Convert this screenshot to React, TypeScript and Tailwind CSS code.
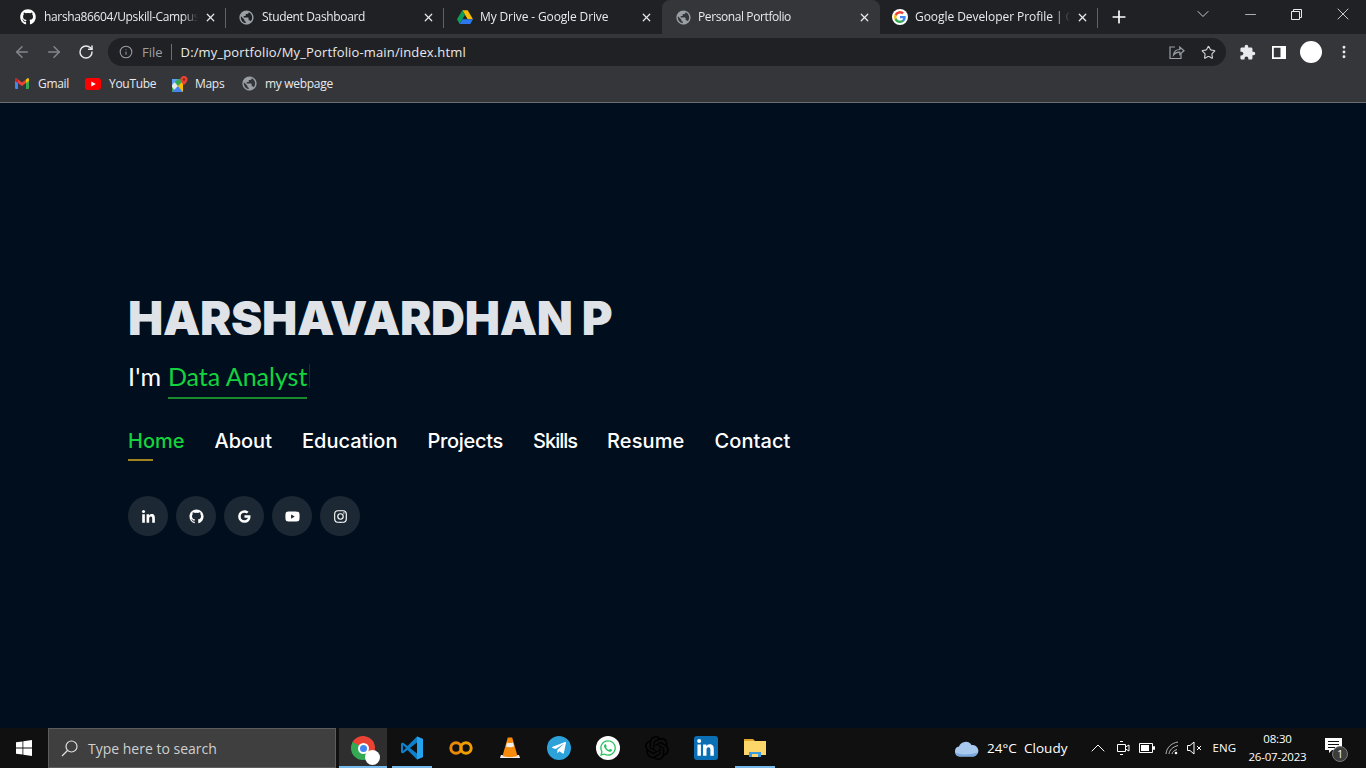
import React from 'react';
import { ArrowLeft, ArrowRight, RotateCw, Info, Star, X, Plus, ChevronDown, ChevronUp, Minus, MoreVertical } from 'lucide-react';
import { FaGithub, FaTelegramPlane, FaWhatsapp, FaLinkedinIn } from 'react-icons/fa';
import { MdPublic, MdExtension } from 'react-icons/md';
import { BiLogoLinkedin, BiLogoGithub, BiLogoGoogle, BiLogoYoutube, BiLogoInstagram } from 'react-icons/bi';
import { SiOpenai } from 'react-icons/si';

const GoogleG = () => (
  <svg width="16" height="16" viewBox="0 0 24 24">
    <circle cx="12" cy="12" r="12" fill="#fff" />
    <path d="M20.6 12.2c0-.6-.1-1.200-.2-1.800H12v3.400h4.800a4.100 4.100 0 0 1-1.800 2.700v2.200h2.900c1.700-1.600 2.700-3.900 2.700-6.500z" fill="#4285f4" />
    <path d="M12 21c2.400 0 4.400-.8 5.900-2.200L15 16.500c-.8.500-1.800.9-3 .9-2.300 0-4.300-1.600-5-3.700H4v2.300A9 9 0 0 0 12 21z" fill="#34a853" />
    <path d="M7 13.700a5.400 5.400 0 0 1 0-3.400V8H4a9 9 0 0 0 0 8z" fill="#fbbc05" />
    <path d="M12 6.600c1.300 0 2.500.5 3.400 1.300L18 5.400A9 9 0 0 0 4 8l3 2.300c.7-2.100 2.700-3.700 5-3.700z" fill="#ea4335" />
  </svg>
);

const DriveIcon = () => (
  <svg width="16" height="16" viewBox="0 0 24 22">
    <path d="M8 1h8l8 13.500h-8z" fill="#fbbc04" />
    <path d="M8 1 0 14.500l4 7 8-14z" fill="#0f9d58" />
    <path d="M4 21.500h16l4-7H8z" fill="#2b78ee" />
  </svg>
);

const GmailIcon = () => (
  <svg width="14" height="11" viewBox="0 0 14 11">
    <path d="M0 1.500C0 .5 1 0 1.800.5L3 1.500V11H1a1 1 0 0 1-1-1z" fill="#4285f4" />
    <path d="M14 1.500c0-1-1-1.500-1.800-1L11 1.500V11h2a1 1 0 0 0 1-1z" fill="#34a853" />
    <path d="M3 1.500 7 4.600l4-3.100V5L7 8 3 5z" fill="#ea4335" />
    <path d="M11 1.500 12.200.5c.8-.5 1.800 0 1.800 1V3l-3 2z" fill="#fbbc04" />
    <path d="M3 1.500 1.800.5C1 0 0 .5 0 1.500V3l3 2z" fill="#c5221f" />
  </svg>
);

const YoutubeIcon = () => (
  <svg width="16" height="12" viewBox="0 0 16 12">
    <rect width="16" height="12" rx="3" fill="#f00" />
    <path d="M6.300 3.400 10.800 6l-4.500 2.600z" fill="#fff" />
  </svg>
);

const MapsIcon = () => (
  <svg width="16" height="16" viewBox="0 0 16 16">
    <path d="M0 3h11v13H0z" fill="#35a853" />
    <path d="M0 3l11 13H4L0 11z" fill="#e8e8e8" />
    <path d="M0 16l6-6 5 6z" fill="#4285f4" />
    <path d="M6 10 11 5v11z" fill="#fbbc04" />
    <path d="M0 3h6L0 9z" fill="#5f9ef5" />
    <path d="M12 0a3.500 3.500 0 0 1 3.500 3.500C15.500 6 12 9 12 9S8.500 6 8.500 3.500A3.500 3.500 0 0 1 12 0z" fill="#ea4335" />
    <circle cx="12" cy="3.500" r="1.200" fill="#8f1f16" />
  </svg>
);

const ShareIcon = () => (
  <svg width="16" height="16" viewBox="0 0 16 16" fill="none" stroke="#9aa0a6" strokeWidth="1.200">
    <path d="M6 3H1v11.500h11V10" />
    <path d="M4.500 11c.4-3.500 2.800-5.400 6.300-5.500V3l4.200 3.800-4.200 3.700V8.200C8 8 6 9 4.500 11z" />
  </svg>
);

const tabs = [
  { title: 'harsha86604/Upskill-Campus-Internship', icon: <FaGithub size={16} color="#fff" />, left: 12, gap: 8, cls: 'tracking-[-0.35px]' },
  { title: 'Student Dashboard', icon: <MdPublic size={17} color="#9aa0a6" />, left: 12, gap: 7, cls: 'tracking-[-0.35px]' },
  { title: 'My Drive - Google Drive', icon: <DriveIcon />, left: 13, gap: 7, cls: 'tracking-[-0.13px]' },
  { title: 'Personal Portfolio', icon: <MdPublic size={17} color="#9aa0a6" />, left: 13, gap: 6, cls: 'tracking-[-0.4px]', active: true },
  { title: 'Google Developer Profile | Google', icon: <GoogleG />, left: 12, gap: 7, cls: 'tracking-[-0.06px]' },
];

const Tab = ({ title, icon, left, gap, cls, active, sep }: { title: string; icon: React.ReactNode; left: number; gap: number; cls: string; active?: boolean; sep: boolean }) => (
  <div
    className={`relative flex items-center w-[218px] pr-[9px] ${active ? 'h-[38px] bg-[#35363a] rounded-t-lg pb-[4px]' : 'h-[34px]'}`}
    style={{ paddingLeft: left }}
  >
    {icon}
    <span
      className={`flex-1 min-w-0 whitespace-nowrap overflow-hidden text-[12px] text-[#e8eaed] [mask-image:linear-gradient(to_right,black_90%,transparent)] ${cls}`}
      style={{ marginLeft: gap }}
    >
      {title}
    </span>
    <X size={13} color="#e8eaed" strokeWidth={2.2} className="ml-[6px] shrink-0" />
    {sep && <div className="absolute right-0 top-[8px] w-px h-[20px] bg-[#5f6368]" />}
  </div>
);

const Bookmark = ({ icon, label, gap, width }: { icon: React.ReactNode; label: string; gap: number; width: number }) => (
  <div className="flex items-center text-[12px] tracking-[-0.3px] text-[#e8eaed] shrink-0" style={{ width }}>
    <span className="flex items-center justify-center shrink-0">{icon}</span>
    <span style={{ marginLeft: gap }}>{label}</span>
  </div>
);

const TaskIcon = ({ children, running, active }: { children: React.ReactNode; running?: boolean; active?: boolean }) => (
  <div className={`relative h-[40px] flex items-center justify-center ${active ? 'w-[48px] bg-[#2e2e2e]' : 'w-[49px]'}`}>
    {children}
    {running && <div className={`absolute bottom-0 h-[2px] bg-[#76b9ed] ${active ? 'left-0 right-0' : 'left-[5px] w-[40px]'}`} />}
  </div>
);

const navLinks = [
  { label: 'Home', cls: 'text-[#13d33f]' },
  { label: 'About', cls: '' },
  { label: 'Education', cls: '' },
  { label: 'Projects', cls: 'tracking-[-0.3px]' },
  { label: 'Skills', cls: 'tracking-[-1px]' },
  { label: 'Resume', cls: 'tracking-[0.1px]' },
  { label: 'Contact', cls: 'tracking-[0.1px]' },
];
const socials = [BiLogoLinkedin, BiLogoGithub, BiLogoGoogle, BiLogoYoutube, BiLogoInstagram];

export default function App() {
  return (
    <div className="w-[1366px] h-[768px] overflow-hidden flex flex-col bg-[#010e1d] font-['Open_Sans',sans-serif]">
      {/* tab strip */}
      <div className="h-[38px] shrink-0 bg-[#202124] flex items-start pl-[8px] relative">
        <div className="absolute left-0 right-0 top-[34px] h-[4px] bg-[#35363a]" />
        <div className="relative flex items-start">
          {tabs.map((t, i) => (
            <Tab key={t.title} {...t} sep={i !== 3 && i !== 2} />
          ))}
        </div>
        <div className="relative h-[34px] flex items-center ml-[11px]">
          <Plus size={20} color="#fff" strokeWidth={2} />
        </div>
        <div className="relative ml-auto h-[28px] flex items-center text-[#e8eaed]">
          <ChevronDown size={20} strokeWidth={1} className="mr-[29px]" />
          <Minus size={17} strokeWidth={1} className="mr-[32px]" />
          <svg width="11" height="11" viewBox="0 0 11 11" fill="none" stroke="#e8eaed" className="mr-[31px]">
            <path d="M.5 2.500h8v8h-8zM2.500 2.500v-2h8v8h-2" />
          </svg>
          <X size={20} strokeWidth={1} className="mr-[13px]" />
        </div>
      </div>

      {/* toolbar */}
      <div className="h-[28px] shrink-0 bg-[#35363a] flex items-center pl-[13px] pr-[13px]">
        <ArrowLeft size={18} color="#83868b" strokeWidth={2} />
        <ArrowRight size={18} color="#83868b" strokeWidth={2} className="ml-[14px]" />
        <RotateCw size={16} color="#e8eaed" strokeWidth={2.2} className="ml-[15px]" />
        <div className="ml-[14px] w-[1118px] h-[28px] rounded-full bg-[#202124] flex items-center pl-[11px] pr-[10px]">
          <Info size={14} color="#9aa0a6" strokeWidth={1.8} />
          <span className="ml-[9px] mt-[2px] text-[13px] text-[#9aa0a6]">File</span>
          <div className="w-px h-[16px] bg-[#6b6e72] ml-[8px]" />
          <span className="ml-[9px] mt-[2px] text-[13px] text-[#e8eaed] tracking-[0.14px]">D:/my_portfolio/My_Portfolio-main/index.html</span>
          <div className="ml-auto flex items-center">
            <ShareIcon />
            <Star size={15} color="#cfd1d4" strokeWidth={1.8} className="ml-[16px]" />
          </div>
        </div>
        <MdExtension size={17} color="#e8eaed" className="ml-[13px]" />
        <svg width="14" height="13" viewBox="0 0 14 13" className="ml-[16px]">
          <path d="M0 0h14v13H0zM1.800 1.800v9.400h6.700V1.800z" fill="#fff" fillRule="evenodd" />
        </svg>
        <div className="w-[22px] h-[22px] rounded-full bg-white ml-[14px]" />
        <MoreVertical size={16} color="#e8eaed" strokeWidth={2.4} className="ml-[14px]" />
      </div>

      {/* bookmarks */}
      <div className="h-[37px] shrink-0 bg-[#35363a] border-b border-[#6c6e72] flex items-center pl-[15px] pb-[1px]">
        <Bookmark icon={<GmailIcon />} label="Gmail" gap={9} width={70} />
        <Bookmark icon={<YoutubeIcon />} label="YouTube" gap={8} width={87} />
        <Bookmark icon={<MapsIcon />} label="Maps" gap={7} width={69} />
        <Bookmark icon={<MdPublic size={17} color="#9aa0a6" />} label="my webpage" gap={7} width={110} />
      </div>

      {/* hero */}
      <main className="flex-1 pl-[128px] pt-[185px]">
        <h1 className="font-['Inter',sans-serif] font-black text-[47px] leading-[60px] text-[#dfe3e8] tracking-[-0.3px]">HARSHAVARDHAN P</h1>
        <div className="mt-[12px] flex items-start font-['Lato',sans-serif] text-[25px] leading-[32px] text-white">
          <span className="tracking-[0.2px]">I'm&nbsp;</span>
          <span className="text-[#13d33f] border-b-2 border-[#1b8a2d] pb-[5px]">Data Analyst</span>
          <span className="w-px h-[24px] bg-[#1c2a33] ml-[2px] mt-[4px]" />
        </div>
        <nav className="mt-[27px] flex items-start gap-[30px] font-['Inter',sans-serif] font-medium text-[20px] leading-[30px] text-white">
          {navLinks.map((l, i) => (
            <div key={l.label} className="flex flex-col">
              <span className={l.cls}>{l.label}</span>
              {i === 0 && <div className="w-[25px] h-[2px] bg-[#a2821f] mt-[3px]" />}
            </div>
          ))}
        </nav>
        <div className="mt-[35px] flex gap-[8px]">
          {socials.map((Icon, i) => (
            <div key={i} className="w-[40px] h-[40px] rounded-full bg-[#1c2833] flex items-center justify-center">
              <Icon size={17} color="#fff" />
            </div>
          ))}
        </div>
      </main>

      {/* taskbar */}
      <div className="h-[40px] shrink-0 bg-[#101010] flex items-center text-white">
        <div className="w-[48px] flex justify-center">
          <svg width="16" height="16" viewBox="0 0 16 16" fill="#fff">
            <path d="M0 2.300 6.500 1.400v6.200H0zM7.300 1.300 16 0v7.600H7.300zM0 8.400h6.500v6.200L0 13.700zM7.300 8.400H16V16l-8.700-1.200z" />
          </svg>
        </div>
        <div className="w-[288px] h-[40px] bg-[#3f3f3f] border border-[#5c5c5c] flex items-center pl-[12px] mr-[3px]">
          <svg width="17" height="17" viewBox="0 0 17 17" fill="none" stroke="#e0e0e0" strokeWidth="1.200">
            <circle cx="10.500" cy="6.500" r="5.500" />
            <path d="M6.500 10.500 1 16" />
          </svg>
          <span className="ml-[10px] text-[14px] text-[#cfcfcf]">Type here to search</span>
        </div>
        <TaskIcon running active>
          <div className="relative w-[24px] h-[24px]">
            <div className="w-[24px] h-[24px] rounded-full bg-[conic-gradient(#ea4335_0deg_120deg,#fbbc04_120deg_150deg,#34a853_150deg_300deg,#ea4335_300deg_360deg)] flex items-center justify-center">
              <div className="w-[11px] h-[11px] rounded-full bg-[#4285f4] border-2 border-white" />
            </div>
            <div className="absolute right-[-5px] bottom-[-5px] w-[15px] h-[15px] rounded-full bg-white" />
          </div>
        </TaskIcon>
        <TaskIcon running>
          <svg width="24" height="24" viewBox="0 0 24 24">
            <path d="M17 .6 7.500 10 3 6.500 1 7.500v9l2 1L7.500 14l9.500 9.400 6-2.400V3z" fill="#0e7fcb" />
            <path d="M17 6.500 10 12l7 5.500z" fill="#101010" />
            <path d="M3 9v6l3-3z" fill="#101010" />
            <path d="M17 .6 23 3v18l-6 2.400z" fill="#24a2ee" />
          </svg>
        </TaskIcon>
        <TaskIcon>
          <svg width="24" height="14" viewBox="0 0 24 14" fill="none" strokeWidth="3">
            <circle cx="7" cy="7" r="5.200" stroke="#e8890a" />
            <circle cx="17" cy="7" r="5.200" stroke="#f09d00" />
          </svg>
        </TaskIcon>
        <TaskIcon>
          <svg width="20" height="24" viewBox="0 0 20 24">
            <path d="M1 19h18l1 3H0z" fill="#f0f0f0" />
            <path d="M7.800 1.500h4.400L17.500 20c-4 1.500-11 1.500-15 0z" fill="#f58a0b" />
            <path d="M7 6.500c1.500.7 4.500.7 6 0l1 4c-2 1-6 1-8 0z" fill="#f0f0f0" />
          </svg>
        </TaskIcon>
        <TaskIcon>
          <div className="w-[24px] h-[24px] rounded-full bg-[#2ca1da] flex items-center justify-center">
            <FaTelegramPlane size={16} color="#fff" />
          </div>
        </TaskIcon>
        <TaskIcon>
          <div className="w-[24px] h-[24px] rounded-full bg-white flex items-center justify-center">
            <FaWhatsapp size={18} color="#29c35f" />
          </div>
        </TaskIcon>
        <TaskIcon>
          <SiOpenai size={24} color="#000" />
        </TaskIcon>
        <TaskIcon>
          <div className="w-[24px] h-[24px] rounded-[3px] bg-[#0a6fb5] flex items-center justify-center">
            <FaLinkedinIn size={19} color="#fff" />
          </div>
        </TaskIcon>
        <TaskIcon running>
          <svg width="22" height="20" viewBox="0 0 22 20">
            <path d="M0 1h9l2 2h-11z" fill="#e2a52b" />
            <path d="M0 3h22v14H0z" fill="#fcd669" />
            <path d="M5 14h12v5H5z" fill="#3c9be0" />
            <path d="M8 16h6v3H8z" fill="#fcd669" />
          </svg>
        </TaskIcon>

        <div className="ml-auto flex items-center">
          <svg width="25" height="17" viewBox="0 0 25 17">
            <path d="M6 16.500a5 5 0 0 1-1-9.900A7 7 0 0 1 17.500 5 5.800 5.800 0 0 1 19.500 16.500z" fill="#a9c8ee" />
            <path d="M1.500 12.500c4 2.500 14 2.500 22 0-.5 2.500-2 4-4 4H6c-2 0-3.700-1.500-4.500-4z" fill="#7ba7e0" />
          </svg>
          <span className="ml-[8px] text-[13.500px] tracking-[0.05px] whitespace-nowrap">24°C&nbsp;&nbsp;Cloudy</span>
          <ChevronUp size={24} strokeWidth={1} className="ml-[18px]" />
          <svg width="14" height="18" viewBox="0 0 14 18" fill="none" stroke="#fff" className="ml-[6px]">
            <path d="M1.500 5.500h8v7h-8zM9.500 8l3.500-2v6l-3.500-2M4 2.500h3M4 15.500h3" />
          </svg>
          <svg width="16" height="10" viewBox="0 0 16 10" className="ml-[9px]">
            <path d="M.5.500h13v9H.500zM14.500 3.500h1v3h-1z" fill="none" stroke="#fff" />
            <path d="M2 2h8v6H2z" fill="#fff" />
          </svg>
          <svg width="14" height="14" viewBox="0 0 14 14" fill="none" stroke="#b8b8b8" className="ml-[10px]">
            <path d="M1 13C1.500 7 6 2 13 1M4 13c.5-4 3.500-7 9-8.500M7 13c.3-2 2-3.500 5-4.500" />
            <circle cx="11" cy="12" r="1.300" fill="#fff" stroke="none" />
          </svg>
          <svg width="16" height="14" viewBox="0 0 16 14" fill="none" stroke="#fff" className="ml-[8px]">
            <path d="M.5 4.500h2.500l4-3.500v12l-4-3.500H.5z" />
            <path d="m10 5 4 4M14 5l-4 4" />
          </svg>
          <span className="ml-[10px] text-[11.500px] whitespace-nowrap">ENG</span>
          <div className="ml-[12px] w-[59px] flex flex-col items-center text-[11.500px] leading-[18px] tracking-[-0.2px] whitespace-nowrap">
            <span>08:30</span>
            <span>26-07-2023</span>
          </div>
          <div className="relative ml-[18px] mr-[21px] w-[20px] h-[20px]">
            <svg width="17" height="16" viewBox="0 0 17 16">
              <path d="M0 0h17v12H7l-3 3v-3H0z" fill="#fff" />
              <path d="M3 3h11v1H3zM3 6h11v1H3zM3 9h7v1H3z" fill="#101010" />
            </svg>
            <div className="absolute right-[-3px] bottom-[-4px] w-[16px] h-[16px] rounded-full bg-[#3c3c3c] border border-[#777] flex items-center justify-center text-[10px] leading-none">1</div>
          </div>
        </div>
      </div>
    </div>
  );
}
